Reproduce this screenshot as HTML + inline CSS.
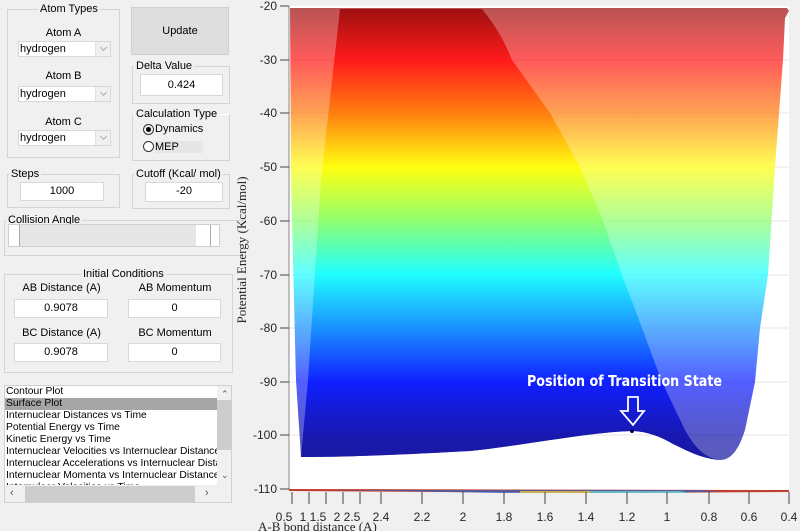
<!DOCTYPE html>
<html><head><style>
body{margin:0;width:800px;height:531px;background:#f0f0f0;position:relative;overflow:hidden;font-family:"Liberation Sans",sans-serif;font-size:11px;color:#000}
.a{position:absolute}
.g{position:absolute;border:1px solid #d4d4d4;box-sizing:border-box}
.gt{position:absolute;background:#f0f0f0;padding:0 2px;top:-7px;white-space:nowrap}
.in{position:absolute;background:#fff;border:1px solid #d8d8d8;box-sizing:border-box;text-align:center;line-height:17px}
.dd{position:absolute;background:#fff;border:1px solid #d8d8d8;box-sizing:border-box;line-height:14px;padding-left:1px}
.dd:after{content:"";position:absolute;right:0;top:0;width:14px;height:14px;background:#f0f0f0;border-left:1px solid #e0e0e0}
.dd i{position:absolute;right:4px;top:3px;width:4px;height:4px;border-right:1px solid #aaa;border-bottom:1px solid #aaa;transform:rotate(45deg);z-index:2}
.lab{position:absolute;text-align:center}
.li{height:12px;line-height:12px;white-space:nowrap;padding-left:1px;font-size:10.3px}
</style></head><body>
<div class="g" style="left:7px;top:9px;width:113px;height:149px"><span class="gt" style="left:30px">Atom Types</span></div>
<div class="lab" style="left:7px;width:113px;top:27px">Atom A</div>
<div class="dd" style="left:18px;top:41px;width:93px;height:16px">hydrogen<i></i></div>
<div class="lab" style="left:7px;width:113px;top:70px">Atom B</div>
<div class="dd" style="left:18px;top:86px;width:93px;height:16px">hydrogen<i></i></div>
<div class="lab" style="left:7px;width:113px;top:116px">Atom C</div>
<div class="dd" style="left:18px;top:130px;width:93px;height:16px">hydrogen<i></i></div>

<div class="a" style="left:131px;top:7px;width:98px;height:48px;background:#dedede;border:1px solid #d0d0d0;box-sizing:border-box;text-align:center;line-height:46px">Update</div>
<div class="g" style="left:132px;top:66px;width:98px;height:38px"><span class="gt" style="left:1px">Delta Value</span></div>
<div class="in" style="left:140px;top:74px;width:83px;height:22px;line-height:20px">0.424</div>
<div class="g" style="left:132px;top:114px;width:98px;height:47px;border-top-color:#fff"><span class="gt" style="left:1px">Calculation Type</span></div>
<div class="a" style="left:143px;top:124px;width:11px;height:11px;border:1px solid #333;border-radius:50%;box-sizing:border-box"><div class="a" style="left:2px;top:2px;width:5px;height:5px;border-radius:50%;background:#000"></div></div>
<div class="a" style="left:155px;top:123px">Dynamics</div>
<div class="a" style="left:155px;top:141px;width:48px;height:12px;background:#e6e6e6"></div>
<div class="a" style="left:143px;top:141px;width:11px;height:11px;border:1px solid #333;border-radius:50%;box-sizing:border-box;background:#fff"></div>
<div class="a" style="left:155px;top:141px">MEP</div>

<div class="g" style="left:7px;top:174px;width:113px;height:34px"><span class="gt" style="left:1px">Steps</span></div>
<div class="in" style="left:20px;top:182px;width:84px;height:19px">1000</div>
<div class="g" style="left:132px;top:174px;width:98px;height:35px"><span class="gt" style="left:1px">Cutoff (Kcal/ mol)</span></div>
<div class="in" style="left:145px;top:182px;width:78px;height:20px">-20</div>

<div class="g" style="left:4px;top:220px;width:240px;height:36px;border-right:none"><span class="gt" style="left:1px">Collision Angle</span></div>
<div class="a" style="left:8px;top:224px;width:212px;height:23px;background:#fff;border:1px solid #cfcfcf;box-sizing:border-box"></div>
<div class="a" style="left:20px;top:225px;width:176px;height:21px;background:#e6e6e6"></div>
<div class="a" style="left:9px;top:225px;width:10px;height:21px;border-right:1px solid #aaa"></div>
<div class="a" style="left:210px;top:225px;width:8px;height:21px;border-left:1px solid #aaa"></div>

<div class="g" style="left:4px;top:274px;width:229px;height:99px"><span class="gt" style="left:76px">Initial Conditions</span></div>
<div class="lab" style="left:4px;width:115px;top:282px">AB Distance (A)</div>
<div class="lab" style="left:120px;width:110px;top:282px">AB Momentum</div>
<div class="in" style="left:14px;top:299px;width:94px;height:19px">0.9078</div>
<div class="in" style="left:128px;top:299px;width:93px;height:19px">0</div>
<div class="lab" style="left:4px;width:115px;top:327px">BC Distance (A)</div>
<div class="lab" style="left:120px;width:110px;top:327px">BC Momentum</div>
<div class="in" style="left:14px;top:343px;width:94px;height:19px">0.9078</div>
<div class="in" style="left:128px;top:343px;width:93px;height:19px">0</div>

<div class="a" style="left:4px;top:385px;width:228px;height:118px;background:#fff;border:1px solid #d0d0d0;box-sizing:border-box;overflow:hidden">
<div class="a" style="left:0;top:0;width:212px;height:99px;overflow:hidden">
<div class="li">Contour Plot</div>
<div class="li" style="background:#a6a6a6">Surface Plot</div>
<div class="li">Internuclear Distances vs Time</div>
<div class="li">Potential Energy vs Time</div>
<div class="li">Kinetic Energy vs Time</div>
<div class="li">Internuclear Velocities vs Internuclear Distance</div>
<div class="li">Internuclear Accelerations vs Internuclear Distance</div>
<div class="li">Internuclear Momenta vs Internuclear Distance</div>
<div class="li">Internulear Velocities vs Time</div>
</div>
<div class="a" style="left:212px;top:0;width:15px;height:99px;background:#f0f0f0"><div class="a" style="left:0;top:14px;width:15px;height:50px;background:#cdcdcd"></div>
<div class="a" style="left:4px;top:3px;font-size:9px;color:#555">&#8963;</div><div class="a" style="left:4px;top:84px;font-size:9px;color:#555">&#8964;</div></div>
<div class="a" style="left:0;top:99px;width:227px;height:18px;background:#f0f0f0"><div class="a" style="left:20px;top:1px;width:170px;height:16px;background:#cdcdcd"></div>
<div class="a" style="left:5px;top:2px;color:#555">&lsaquo;</div><div class="a" style="left:200px;top:2px;color:#555">&rsaquo;</div></div>
</div>

<svg class="a" style="left:0;top:0" width="800" height="531">
<defs>
<linearGradient id="c" x1="0" y1="6" x2="0" y2="460" gradientUnits="userSpaceOnUse">
<stop offset="0" stop-color="#9a1010"/>
<stop offset="0.119" stop-color="#ff1a1a"/>
<stop offset="0.236" stop-color="#ff7f10"/>
<stop offset="0.355" stop-color="#ffff10"/>
<stop offset="0.473" stop-color="#90ff70"/>
<stop offset="0.59" stop-color="#20ffff"/>
<stop offset="0.71" stop-color="#1a90ff"/>
<stop offset="0.828" stop-color="#1020ff"/>
<stop offset="0.945" stop-color="#1818b0"/>
<stop offset="1" stop-color="#1a1aa0"/>
</linearGradient>
</defs>
<rect x="289" y="6" width="500" height="484" fill="#fff"/>
<g stroke="#e6e6e6" stroke-width="1">
<line x1="289" y1="60" x2="789" y2="60"/><line x1="289" y1="113" x2="789" y2="113"/><line x1="289" y1="167" x2="789" y2="167"/><line x1="289" y1="221" x2="789" y2="221"/><line x1="289" y1="275" x2="789" y2="275"/><line x1="289" y1="328" x2="789" y2="328"/><line x1="289" y1="382" x2="789" y2="382"/><line x1="289" y1="435" x2="789" y2="435"/>
</g>
<path d="M290,8 L787,8 L789,11 L785,18 L783,60 L775,167 L768,275 L760,328 L755,382 L745,430 C738,452 730,460 720,460 C700,458 690,452 673,444 C660,436 645,431 632,431 C590,432 520,446 470,451 C400,455 340,457 301,457 L296,380 L291,180 Z" fill="url(#c)" opacity="0.72"/>
<path d="M340,9 L482,9 C495,25 504,40 512,60 L550,113 L580,167 L603,221 L622,275 L642,328 L662,382 L685,430 C695,448 705,458 720,460 C700,458 690,452 673,444 C660,436 645,431 632,431 C590,432 520,446 470,451 C400,455 340,457 301,457 L308,380 L321,180 Z" fill="url(#c)"/>
<circle cx="632" cy="431" r="2" fill="#000050"/>
<text x="527" y="386" font-family="'DejaVu Sans',sans-serif" font-weight="bold" font-size="15" fill="#fff" textLength="195" lengthAdjust="spacingAndGlyphs">Position of Transition State</text>
<path d="M628,397 L638,397 L638,411 L644,411 L633,425 L621,411 L628,411 Z" fill="none" stroke="#fff" stroke-width="1.8"/>
<line x1="289" y1="6" x2="289" y2="490" stroke="#888"/>
<path d="M289,489 L789,490 L789,492 L600,493 L289,491 Z" fill="#c04030"/>
<path d="M330,490 L700,490 L720,492 L500,493 Z" fill="#3060c0" opacity="0.7"/>
<path d="M580,491 L680,491 L690,493 L590,493 Z" fill="#60d0d0" opacity="0.8"/>
<path d="M520,491 L590,491 L590,493 L520,493 Z" fill="#e0c040" opacity="0.8"/>
<g stroke="#444" stroke-width="1">
<line x1="280" y1="6" x2="289" y2="6"/><line x1="280" y1="60" x2="289" y2="60"/><line x1="280" y1="113" x2="289" y2="113"/><line x1="280" y1="167" x2="289" y2="167"/><line x1="280" y1="221" x2="289" y2="221"/><line x1="280" y1="275" x2="289" y2="275"/><line x1="280" y1="328" x2="289" y2="328"/><line x1="280" y1="382" x2="289" y2="382"/><line x1="280" y1="435" x2="289" y2="435"/><line x1="280" y1="489" x2="289" y2="489"/>
<line x1="292" y1="492" x2="292" y2="504"/><line x1="309" y1="492" x2="309" y2="504"/><line x1="326" y1="492" x2="326" y2="504"/><line x1="343" y1="492" x2="343" y2="504"/><line x1="360" y1="492" x2="360" y2="504"/><line x1="381" y1="492" x2="381" y2="504"/><line x1="422" y1="492" x2="422" y2="504"/><line x1="463" y1="492" x2="463" y2="504"/><line x1="504" y1="492" x2="504" y2="504"/><line x1="545" y1="492" x2="545" y2="504"/><line x1="586" y1="492" x2="586" y2="504"/><line x1="627" y1="492" x2="627" y2="504"/><line x1="667" y1="492" x2="667" y2="504"/><line x1="709" y1="492" x2="709" y2="504"/><line x1="749" y1="492" x2="749" y2="504"/><line x1="789" y1="492" x2="789" y2="504"/>
</g>
<g font-family="'Liberation Sans',sans-serif" font-size="12" fill="#262626" text-anchor="end">
<text x="277" y="10">-20</text><text x="277" y="64">-30</text><text x="277" y="117">-40</text><text x="277" y="171">-50</text><text x="277" y="225">-60</text><text x="277" y="279">-70</text><text x="277" y="332">-80</text><text x="277" y="386">-90</text><text x="277" y="439">-100</text><text x="277" y="493">-110</text>
</g>
<g font-family="'Liberation Sans',sans-serif" font-size="12" fill="#262626" text-anchor="middle">
<text x="284" y="521">0.5</text><text x="303" y="521">1</text><text x="318" y="521">1.5</text><text x="337" y="521">2</text><text x="352" y="521">2.5</text><text x="381" y="521">2.4</text><text x="422" y="521">2.2</text><text x="463" y="521">2</text><text x="504" y="521">1.8</text><text x="545" y="521">1.6</text><text x="586" y="521">1.4</text><text x="627" y="521">1.2</text><text x="667" y="521">1</text><text x="709" y="521">0.8</text><text x="749" y="521">0.6</text><text x="789" y="521">0.4</text>
</g>
<text x="258" y="531" font-family="'Liberation Serif',serif" font-size="13" fill="#262626">A-B bond distance (A)</text>
<text transform="translate(246,250) rotate(-90)" font-family="'Liberation Serif',serif" font-size="13" fill="#262626" text-anchor="middle">Potential Energy (Kcal/mol)</text>
</svg>
</body></html>
